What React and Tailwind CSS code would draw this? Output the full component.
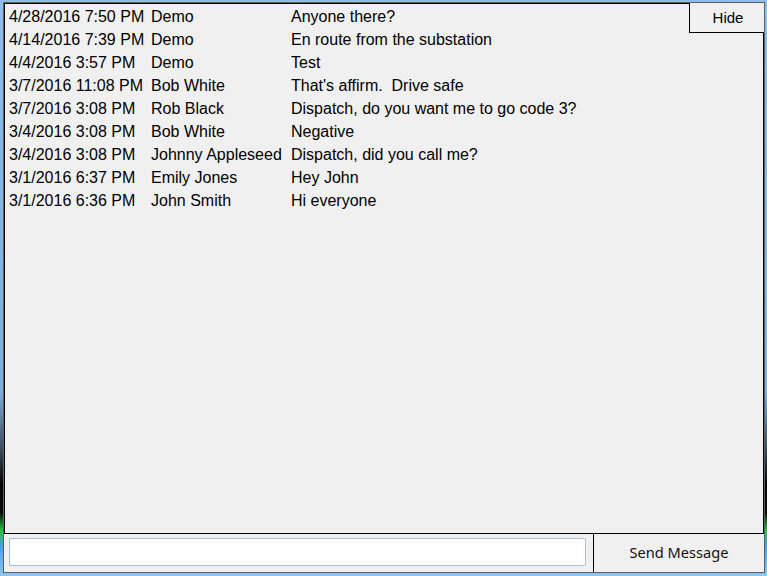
import React from 'react'

const messages = [
  ['4/28/2016 7:50 PM', 'Demo', 'Anyone there?'],
  ['4/14/2016 7:39 PM', 'Demo', 'En route from the substation'],
  ['4/4/2016 3:57 PM', 'Demo', 'Test'],
  ['3/7/2016 11:08 PM', 'Bob White', "That's affirm.  Drive safe"],
  ['3/7/2016 3:08 PM', 'Rob Black', 'Dispatch, do you want me to go code 3?'],
  ['3/4/2016 3:08 PM', 'Bob White', 'Negative'],
  ['3/4/2016 3:08 PM', 'Johnny Appleseed', 'Dispatch, did you call me?'],
  ['3/1/2016 6:37 PM', 'Emily Jones', 'Hey John'],
  ['3/1/2016 6:36 PM', 'John Smith', 'Hi everyone'],
]

export default function App() {
  return (
    <div className="w-[767px] h-[576px] overflow-hidden pt-[2px] pl-[3px] bg-[linear-gradient(to_bottom,#8dbde8_0%,#7db0de_68%,#3a4a5a_78%,#050505_84%,#0a0a0a_89%,#22c43c_92%,#4aa0e6_95%,#8fc6f2_100%)]">
      <div className="w-[762px] h-[571px] border border-[#5e5e5e] bg-[#f0f0f0] flex flex-col">
        <div className="relative h-[531px] border border-black pt-px pl-[4px] font-['Liberation_Sans',Arial,sans-serif] text-[16px] leading-[23px] text-black">
          {messages.map(([date, name, text], i) => (
            <div key={i} className="flex whitespace-pre">
              <span className="w-[142px]">{date}</span>
              <span className="w-[140px]">{name}</span>
              <span>{text}</span>
            </div>
          ))}
          <button className="absolute -top-px -right-px w-[75px] h-[30px] border-l border-b border-black bg-[#f0f0f0] text-[15px] leading-none font-['Liberation_Sans',Arial,sans-serif] pl-[2px]">
            Hide
          </button>
        </div>
        <div className="flex-1 flex items-stretch">
          <div className="flex-1 pl-[5px] pt-[4px]">
            <input
              className="w-[577px] h-[28px] bg-white border border-[#a9c2dc] outline-none rounded-[1px]"
              type="text"
            />
          </div>
          <button className="-mt-px w-[171px] border-l border-black bg-[#f0f0f0] text-[14.6px] font-['Noto_Sans',sans-serif] text-[#111]">
            Send Message
          </button>
        </div>
      </div>
    </div>
  )
}
